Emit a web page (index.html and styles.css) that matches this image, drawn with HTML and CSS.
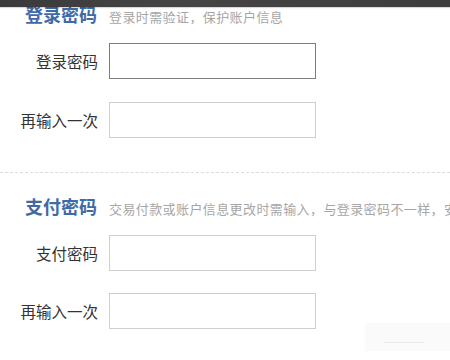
FILE: index.html
```html
<!DOCTYPE html>
<html lang="zh-CN">
<head>
<meta charset="utf-8">
<title>密码设置</title>
<link rel="stylesheet" href="styles.css">
</head>
<body>
<div class="topbar"></div>
<div class="page">
  <section class="block first">
    <div class="head">
      <h2 class="title">登录密码</h2>
      <span class="desc">登录时需验证，保护账户信息</span>
    </div>
    <div class="row">
      <label class="label">登录密码</label>
      <input class="field focused" type="password">
    </div>
    <div class="row">
      <label class="label">再输入一次</label>
      <input class="field" type="password">
    </div>
  </section>
  <section class="block divided">
    <div class="head">
      <h2 class="title">支付密码</h2>
      <span class="desc">交易付款或账户信息更改时需输入，与登录密码不一样，安</span>
    </div>
    <div class="row">
      <label class="label">支付密码</label>
      <input class="field" type="password">
    </div>
    <div class="row">
      <label class="label">再输入一次</label>
      <input class="field" type="password">
    </div>
  </section>
</div>
<div class="smudge"><span class="smudge-line"></span></div>
</body>
</html>
```
FILE: styles.css
```css
html, body {
  margin: 0;
  padding: 0;
  background: #ffffff;
  overflow: hidden;
}
body {
  font-family: "Noto Sans CJK SC", "Noto Sans", sans-serif;
  color: #333333;
  width: 450px;
  height: 360px;
  position: relative;
}
.topbar {
  position: fixed;
  top: 0;
  left: 0;
  right: 0;
  height: 7px;
  background: linear-gradient(90deg, #3a3a3a 0%, #454545 40%, #3c3c3c 100%);
  box-shadow: 0 1px 1px rgba(0,0,0,0.15);
  z-index: 5;
}
.page {
  margin-top: -18px;
  white-space: nowrap;
}
.block {
  padding: 17px 0 35px;
  display: flex;
  flex-direction: column;
  gap: 22px;
}
.block.first {
  gap: 23px;
  padding-bottom: 34px;
}
.block.divided {
  border-top: 1px dashed #dcdcdc;
  padding-top: 18px;
}
.head {
  display: flex;
  align-items: baseline;
  height: 30px;
  margin-bottom: -8px;
  line-height: 30px;
  overflow: hidden;
}
.block.first .head {
  margin-bottom: -9px;
}
.title {
  margin: 0;
  width: 97px;
  text-align: right;
  font-size: 18px;
  font-weight: 700;
  color: #3f6aa6;
  flex: none;
}
.desc {
  margin-left: 12px;
  font-size: 13px;
  letter-spacing: 0.4px;
  color: #a6a6a6;
}
.row {
  display: flex;
  align-items: center;
  height: 36px;
}
.label {
  width: 98px;
  text-align: right;
  font-size: 15.5px;
  color: #333333;
  flex: none;
}
.field {
  margin: 0 0 0 11px;
  width: 207px;
  height: 36px;
  box-sizing: border-box;
  border: 1px solid #cfcfcf;
  background: #ffffff;
  padding: 0 6px;
  outline: none;
}
.field.focused {
  border-color: #7d7d7d;
}
.smudge {
  position: absolute;
  left: 365px;
  top: 323px;
  width: 85px;
  height: 28px;
  background: #fafafa;
}
.smudge-line {
  position: absolute;
  left: 18px;
  top: 19px;
  width: 42px;
  height: 1px;
  background: #ececec;
}
```
